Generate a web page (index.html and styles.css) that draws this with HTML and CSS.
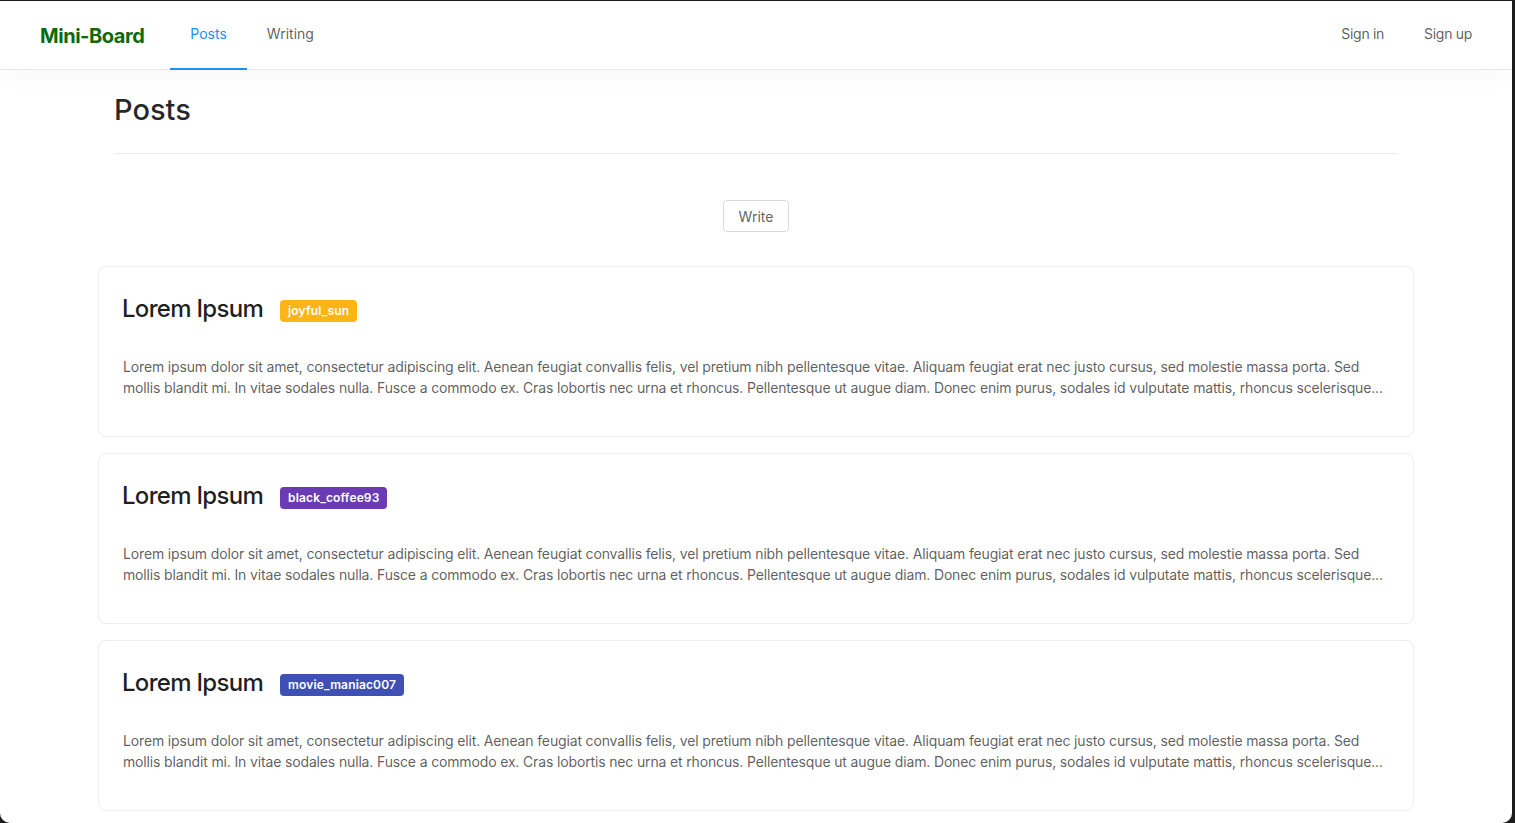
FILE: index.html
```html
<!DOCTYPE html>
<html lang="en">
<head>
<meta charset="utf-8">
<title>Mini-Board</title>
<link rel="stylesheet" href="styles.css">
</head>
<body>
<div class="window">
  <header class="navbar">
    <div class="logo">Mini-Board</div>
    <nav class="menu">
      <a class="menu-item active">Posts</a>
      <a class="menu-item">Writing</a>
    </nav>
    <nav class="menu right">
      <a class="menu-item">Sign in</a>
      <a class="menu-item">Sign up</a>
    </nav>
  </header>
  <main class="content">
    <div class="page-head">
      <h1>Posts</h1>
    </div>
    <div class="actions">
      <button class="btn">Write</button>
    </div>
    <div class="list">
      <article class="card">
        <div class="card-title">
          <h2>Lorem Ipsum</h2>
          <span class="tag gold">joyful_sun</span>
        </div>
        <p>Lorem ipsum dolor sit amet, consectetur adipiscing elit. Aenean feugiat convallis felis, vel pretium nibh pellentesque vitae. Aliquam feugiat erat nec justo cursus, sed molestie massa porta. Sed mollis blandit mi. In vitae sodales nulla. Fusce a commodo ex. Cras lobortis nec urna et rhoncus. Pellentesque ut augue diam. Donec enim purus, sodales id vulputate mattis, rhoncus scelerisque...</p>
      </article>
      <article class="card">
        <div class="card-title">
          <h2>Lorem Ipsum</h2>
          <span class="tag purple">black_coffee93</span>
        </div>
        <p>Lorem ipsum dolor sit amet, consectetur adipiscing elit. Aenean feugiat convallis felis, vel pretium nibh pellentesque vitae. Aliquam feugiat erat nec justo cursus, sed molestie massa porta. Sed mollis blandit mi. In vitae sodales nulla. Fusce a commodo ex. Cras lobortis nec urna et rhoncus. Pellentesque ut augue diam. Donec enim purus, sodales id vulputate mattis, rhoncus scelerisque...</p>
      </article>
      <article class="card">
        <div class="card-title">
          <h2>Lorem Ipsum</h2>
          <span class="tag indigo">movie_maniac007</span>
        </div>
        <p>Lorem ipsum dolor sit amet, consectetur adipiscing elit. Aenean feugiat convallis felis, vel pretium nibh pellentesque vitae. Aliquam feugiat erat nec justo cursus, sed molestie massa porta. Sed mollis blandit mi. In vitae sodales nulla. Fusce a commodo ex. Cras lobortis nec urna et rhoncus. Pellentesque ut augue diam. Donec enim purus, sodales id vulputate mattis, rhoncus scelerisque...</p>
      </article>
    </div>
  </main>
  <div class="scrollbar"></div>
</div>
</body>
</html>
```

FILE: styles.css
```css
* { box-sizing: border-box; }
html, body {
  margin: 0;
  padding: 0;
  background: #1c1c1c;
  overflow: hidden;
}
body {
  font-family: Inter, "Noto Sans", "Liberation Sans", sans-serif;
  color: rgba(0, 0, 0, 0.85);
}
.window {
  position: relative;
  margin-top: 1px;
  width: 1512px;
  height: 822px;
  background: #fff;
  border-radius: 0 0 10px 10px;
  overflow: hidden;
}
.scrollbar {
  position: absolute;
  right: 0;
  top: 0;
  width: 2px;
  height: 55px;
  background: #1a7fe0;
}
.navbar {
  display: flex;
  align-items: stretch;
  height: 69px;
  padding: 0 40px;
  border-bottom: 1px solid #e8e8e8;
  background: #fff;
  box-shadow: 0 2px 30px rgba(0, 0, 0, 0.04);
  position: relative;
  z-index: 1;
}
.logo {
  display: flex;
  align-items: center;
  font-size: 20px;
  font-weight: 700;
  color: #0b6b0b;
  margin-right: 26px;
  letter-spacing: -0.45px;
  padding-top: 2px;
}
.menu {
  display: flex;
  align-items: stretch;
}
.menu.right {
  margin-left: auto;
  margin-right: -20px;
}
.menu-item {
  display: flex;
  align-items: center;
  padding: 0 20px 2px;
  font-size: 14px;
  color: rgba(0, 0, 0, 0.65);
  border-bottom: 2px solid transparent;
  margin-bottom: -1px;
  cursor: pointer;
}
.menu.right .menu-item {
  letter-spacing: -0.3px;
}
.menu-item.active {
  color: #1890ff;
  border-bottom-color: #1890ff;
}
.content {
  padding: 0 98px;
}
.page-head {
  margin: 0 16px;
  padding: 20px 0 23px;
  border-bottom: 1px solid #ebebeb;
}
.page-head h1 {
  margin: 0;
  font-size: 29px;
  font-weight: 500;
  line-height: 40px;
  color: rgba(0, 0, 0, 0.85);
}
.actions {
  display: flex;
  justify-content: center;
  padding: 46px 0 34px;
}
.btn {
  font-family: inherit;
  font-size: 14px;
  color: rgba(0, 0, 0, 0.65);
  background: #fff;
  border: 1px solid #d9d9d9;
  border-radius: 4px;
  height: 32px;
  padding: 0 15px;
  cursor: pointer;
}
.list {
  display: flex;
  flex-direction: column;
  gap: 16px;
}
.card {
  border: 1px solid #eeeeee;
  border-radius: 8px;
  padding: 25px 24px 23px;
  height: 171px;
}
.card-title {
  display: flex;
  align-items: center;
  gap: 17px;
  height: 32px;
}
.card-title h2 {
  margin: 0 0 0 -1px;
  font-size: 24px;
  font-weight: 500;
  color: rgba(0, 0, 0, 0.88);
  letter-spacing: -0.7px;
}
.tag {
  display: inline-flex;
  align-items: center;
  height: 22px;
  padding: 0 8px;
  border-radius: 4px;
  font-size: 12px;
  font-weight: 600;
  letter-spacing: 0.15px;
  color: #fff;
  margin-top: 5px;
}
.tag.gold { background: #fdb515; }
.tag.purple { background: #6a3bb4; }
.tag.indigo { background: #3e50b4; }
.card p {
  margin: 32px 0 0;
  font-size: 14px;
  line-height: 21px;
  letter-spacing: -0.15px;
  color: rgba(0, 0, 0, 0.65);
}
```
